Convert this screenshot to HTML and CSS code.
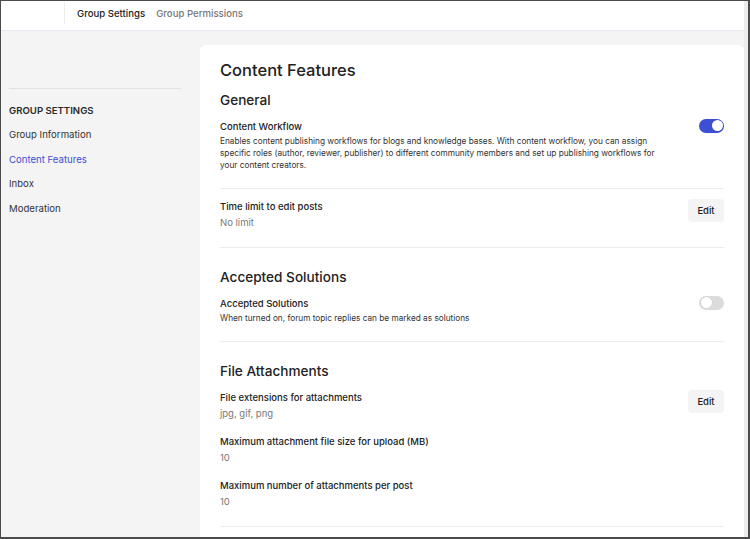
FILE: index.html
```html
<!DOCTYPE html>
<html lang="en">
<head>
<meta charset="utf-8">
<title>Content Features</title>
<link rel="stylesheet" href="styles.css">
</head>
<body>
<div class="frame">
  <header class="topbar">
    <div class="brand"></div>
    <nav class="tabs">
      <a class="tab active">Group Settings</a>
      <a class="tab">Group Permissions</a>
    </nav>
  </header>
  <div class="body">
    <aside class="sidebar">
      <div class="side-rule"></div>
      <div class="side-title">GROUP SETTINGS</div>
      <a class="side-link">Group Information</a>
      <a class="side-link current">Content Features</a>
      <a class="side-link">Inbox</a>
      <a class="side-link">Moderation</a>
    </aside>
    <main class="card">
      <h1 class="page-title">Content Features</h1>

      <section class="section">
        <h2 class="section-title">General</h2>
        <div class="row">
          <div class="row-text">
            <div class="label">Content Workflow</div>
            <div class="desc">Enables content publishing workflows for blogs and knowledge bases. With content workflow, you can assign specific roles (author, reviewer, publisher) to different community members and set up publishing workflows for your content creators.</div>
          </div>
          <span class="toggle on"></span>
        </div>
        <div class="row">
          <div class="row-text">
            <div class="label">Time limit to edit posts</div>
            <div class="value">No limit</div>
          </div>
          <button class="edit">Edit</button>
        </div>
      </section>

      <section class="section">
        <h2 class="section-title">Accepted Solutions</h2>
        <div class="row">
          <div class="row-text">
            <div class="label">Accepted Solutions</div>
            <div class="desc">When turned on, forum topic replies can be marked as solutions</div>
          </div>
          <span class="toggle"></span>
        </div>
      </section>

      <section class="section">
        <h2 class="section-title">File Attachments</h2>
        <div class="row">
          <div class="row-text">
            <div class="label">File extensions for attachments</div>
            <div class="value">jpg, gif, png</div>
            <div class="label gap">Maximum attachment file size for upload (MB)</div>
            <div class="value">10</div>
            <div class="label gap">Maximum number of attachments per post</div>
            <div class="value">10</div>
          </div>
          <button class="edit">Edit</button>
        </div>
      </section>
    </main>
  </div>
</div>
</body>
</html>
```

FILE: styles.css
```css
* { box-sizing: border-box; }
html, body { margin: 0; padding: 0; height: 100%; }
body {
  font-family: Inter, "Noto Sans", "Liberation Sans", sans-serif;
  color: #222;
  background: #fff;
  overflow: hidden;
}
.frame {
  height: 539px;
  border-top: 1px solid #4b4b4b;
  border-left: 1px solid #4b4b4b;
  border-right: 2px solid #4b4b4b;
  border-bottom: 2px solid #4b4b4b;
  background: #ececec;
  padding-right: 4px;
  display: flex;
  flex-direction: column;
  overflow: hidden;
}
.topbar {
  height: 30px;
  flex: none;
  background: #fff;
  border-bottom: 1px solid #e3e8f1;
  display: flex;
  align-items: flex-start;
}
.brand {
  width: 64px;
  height: 22px;
  margin-top: 1px;
  border-right: 1px solid #ececec;
}
.tabs {
  display: flex;
  gap: 11px;
  padding-left: 12px;
  padding-top: 6px;
}
.tab {
  font-size: 9.6px;
  font-weight: 500;
  color: #777;
  line-height: 14px;
}
.tab.active { color: #222; }
.body {
  flex: 1;
  display: flex;
  background: #f4f4f4;
  min-height: 0;
}
.sidebar {
  width: 199px;
  flex: none;
  padding: 57px 19px 0 8px;
  display: flex;
  flex-direction: column;
}
.side-rule {
  height: 1px;
  background: #e2e2e2;
  margin-bottom: 15px;
}
.side-title {
  font-size: 9.6px;
  font-weight: 600;
  color: #2a2a2a;
  line-height: 14px;
  margin-bottom: 10px;
}
.side-link {
  font-size: 9.6px;
  color: #333;
  line-height: 14px;
  margin-bottom: 10.5px;
}
.side-link.current { color: #3b4fd6; }
.card {
  flex: 1;
  margin-top: 14px;
  background: #fff;
  border-radius: 6px 6px 0 0;
  padding: 13px 20px 0 20px;
  overflow: hidden;
}
.page-title {
  margin: 0;
  font-size: 16.5px;
  font-weight: 500;
  line-height: 24px;
  color: #222;
}
.section {
  padding-top: 8px;
}
.section + .section { padding-top: 19.5px; }
.section-title {
  margin: 0 0 9.5px;
  font-size: 13.6px;
  font-weight: 500;
  line-height: 20px;
  color: #222;
}
.row {
  display: flex;
  justify-content: space-between;
  align-items: flex-start;
  border-bottom: 1px solid #ececec;
  padding: 0 0 17px;
}
.row + .row { padding-top: 11px; }
.row-text { max-width: 440px; }
.label {
  font-size: 9.5px;
  font-weight: 500;
  color: #222;
  line-height: 14px;
}
.label.gap { margin-top: 14px; }
.desc {
  font-size: 8.25px;
  color: #333;
  line-height: 12px;
  margin-top: 1px;
}
.value {
  font-size: 9.5px;
  color: #777;
  line-height: 14px;
  margin-top: 2px;
}
.toggle {
  flex: none;
  position: relative;
  width: 25px;
  height: 14px;
  border-radius: 7px;
  background: #dcdcdc;
  margin-top: -1px;
}
.toggle::after {
  content: "";
  position: absolute;
  top: 1.5px;
  left: 1.5px;
  width: 11px;
  height: 11px;
  border-radius: 50%;
  background: #fff;
  box-shadow: 0 0 0 0.5px rgba(0,0,0,0.08);
}
.toggle.on { background: #3d4fd4; }
.toggle.on::after { left: 12.5px; }
.edit {
  flex: none;
  font-family: inherit;
  font-size: 9.5px;
  font-weight: 500;
  color: #222;
  background: #f4f4f4;
  border: none;
  border-radius: 4px;
  width: 36px;
  height: 23px;
  padding: 0;
  margin-top: -1px;
}
```
